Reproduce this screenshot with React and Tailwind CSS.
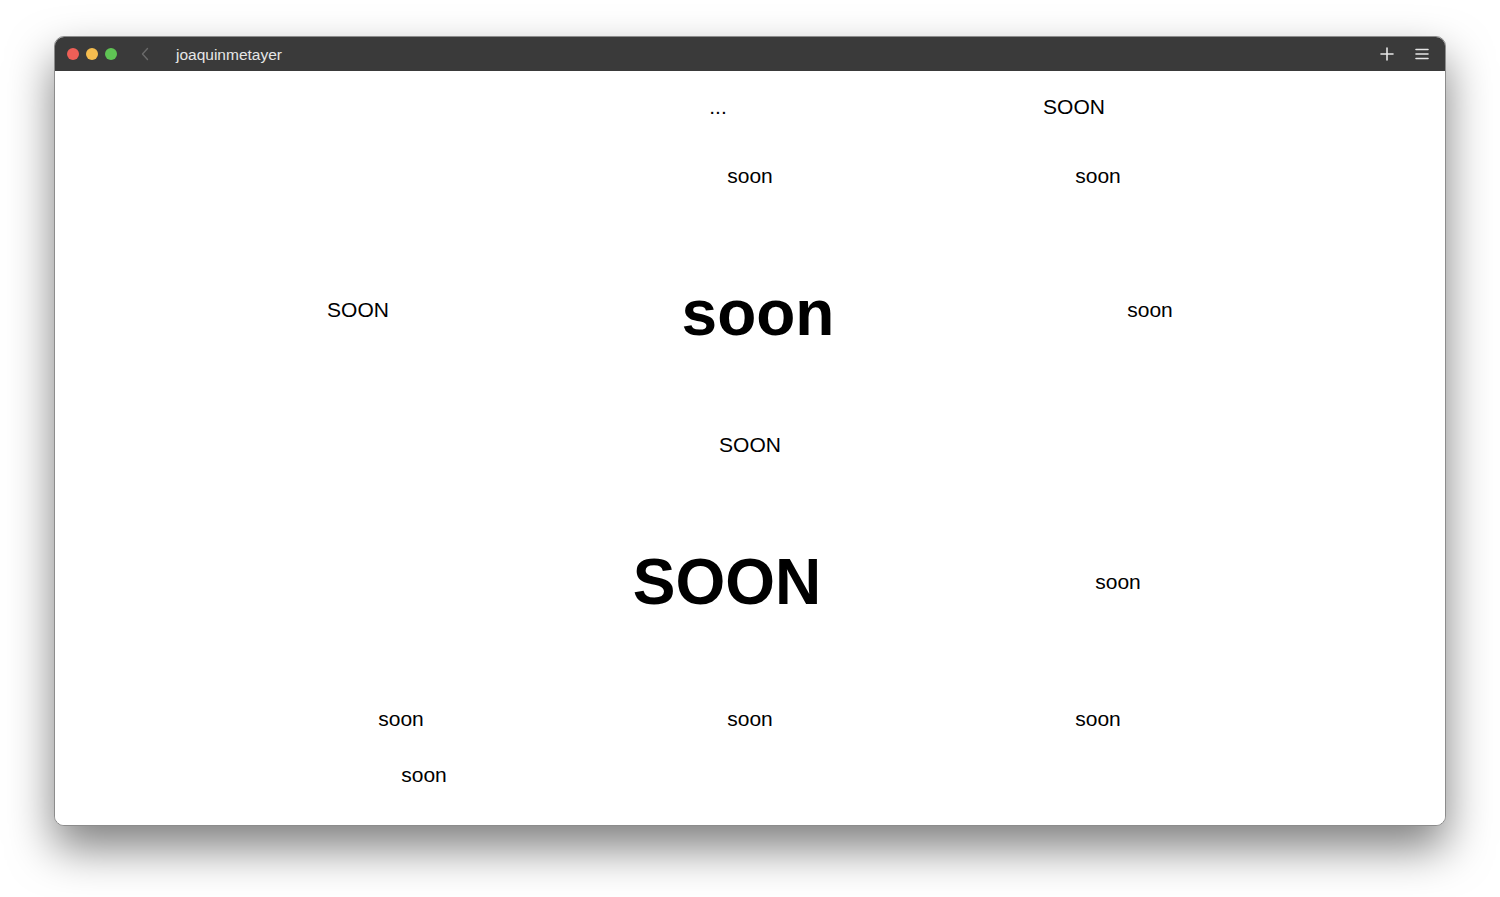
import React from 'react';

const words = [
  { text: '...', x: 663, y: 25, big: false },
  { text: 'SOON', x: 1019, y: 25, big: false },
  { text: 'soon', x: 695, y: 94, big: false },
  { text: 'soon', x: 1043, y: 94, big: false },
  { text: 'SOON', x: 303, y: 228, big: false },
  { text: 'soon', x: 703, y: 210, big: true },
  { text: 'soon', x: 1095, y: 228, big: false },
  { text: 'SOON', x: 695, y: 363, big: false },
  { text: 'SOON', x: 672, y: 479, big: true },
  { text: 'soon', x: 1063, y: 500, big: false },
  { text: 'soon', x: 346, y: 637, big: false },
  { text: 'soon', x: 695, y: 637, big: false },
  { text: 'soon', x: 1043, y: 637, big: false },
  { text: 'soon', x: 369, y: 693, big: false },
];

const TitleBar = () => (
  <div className="flex h-[34px] items-center bg-[#3a3a3a] px-[12px]">
    <div className="flex items-center gap-[7px]">
      <span className="h-[12px] w-[12px] rounded-full bg-[#ee5f57]" />
      <span className="h-[12px] w-[12px] rounded-full bg-[#f5bd4f]" />
      <span className="h-[12px] w-[12px] rounded-full bg-[#5fc454]" />
    </div>
    <svg className="ml-[24px]" width="8" height="14" viewBox="0 0 8 14" fill="none">
      <path d="M6.5 1.5 1.5 7l5 5.5" stroke="#6a6a6a" strokeWidth="1.4" strokeLinecap="round" strokeLinejoin="round" />
    </svg>
    <span className="ml-[27px] mt-[2px] text-[15.5px] text-[#e6e6e6]">joaquinmetayer</span>
    <div className="ml-auto flex items-center gap-[21px] pr-[4px]">
      <svg width="14" height="14" viewBox="0 0 14 14" fill="none">
        <path d="M7 1v12M1 7h12" stroke="#e6e6e6" strokeWidth="1.6" strokeLinecap="round" />
      </svg>
      <svg width="14" height="12" viewBox="0 0 14 12" fill="none">
        <path d="M1 1.5h12M1 6h12M1 10.5h12" stroke="#e6e6e6" strokeWidth="1.6" strokeLinecap="round" />
      </svg>
    </div>
  </div>
);

export default function App() {
  return (
    <div className="h-[897px] w-full bg-white pt-[36px] font-['Liberation_Sans',Arial,sans-serif]">
      <div className="mx-auto flex h-[790px] w-[1392px] flex-col overflow-hidden rounded-[10px] border border-[#8c8c8c] bg-white shadow-[0_22px_45px_rgba(0,0,0,0.5)]">
        <TitleBar />
        {/* scattered words on the page */}
        <div className="relative flex-1 bg-white text-black">
          {words.map((w, i) => (
            <span
              key={i}
              className={
                w.big
                  ? 'absolute -translate-x-1/2 whitespace-nowrap text-[64px] font-bold leading-none'
                  : 'absolute -translate-x-1/2 whitespace-nowrap text-[21px] leading-none'
              }
              style={{ left: w.x, top: w.y }}
            >
              {w.text}
            </span>
          ))}
        </div>
      </div>
    </div>
  );
}
